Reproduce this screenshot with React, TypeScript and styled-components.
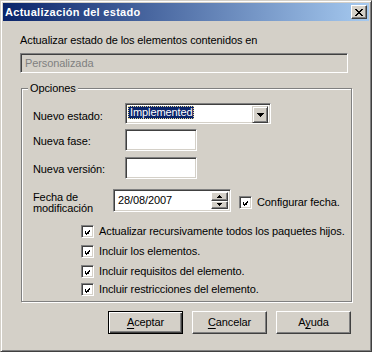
import styled, { createGlobalStyle, css } from 'styled-components'

const GlobalStyle = createGlobalStyle`
  html, body {
    margin: 0;
    padding: 0;
    background: #D4D0C8;
  }
  body {
    font-family: "Liberation Sans", Arial, sans-serif;
    font-size: 11px;
    line-height: 13px;
    letter-spacing: -0.1px;
    color: #000;
  }
`

const raised = css`
  box-sizing: border-box;
  background: #D4D0C8;
  border: 1px solid;
  border-color: #fff #404040 #404040 #fff;
  box-shadow: inset -1px -1px #808080;
`

const sunken = css`
  box-sizing: border-box;
  border: 1px solid;
  border-color: #808080 #fff #fff #808080;
  box-shadow: inset 1px 1px #404040, inset -1px -1px #D4D0C8;
`

const Window = styled.div`
  box-sizing: border-box;
  width: 372px;
  height: 352px;
  background: #D4D0C8;
  border: 1px solid;
  border-color: #D4D0C8 #404040 #404040 #D4D0C8;
  box-shadow: inset 1px 1px #fff, inset -1px -1px #808080;
  padding: 2px;
  display: flex;
  flex-direction: column;
`

const TitleBar = styled.div`
  flex: none;
  height: 18px;
  display: flex;
  align-items: center;
  justify-content: space-between;
  padding: 0 2px;
  background: linear-gradient(to right, #0A246A, #A6CAF0);
`

const Title = styled.span`
  color: #fff;
  font-weight: bold;
  letter-spacing: 0.3px;
`

const CloseButton = styled.div`
  ${raised};
  width: 16px;
  height: 14px;
  display: flex;
  align-items: center;
  justify-content: center;
`

const Content = styled.div`
  display: flex;
  flex-direction: column;
  align-items: flex-start;
  padding: 13px 0 0 17px;
`

const Prompt = styled.div`
  line-height: 13px;
`

const DisabledBox = styled.div`
  ${sunken};
  margin-top: 6px;
  width: 328px;
  height: 20px;
  padding: 3px 0 0 4px;
  color: #808080;
`

const Group = styled.fieldset`
  box-sizing: border-box;
  margin: 9px 0 0 1px;
  width: 331px;
  min-width: 0;
  padding: 8px 0 5px 11px;
  border: 1px solid #808080;
  box-shadow: inset 1px 1px #fff, 1px 1px #fff;
`

const Legend = styled.legend`
  margin-left: -5px;
  padding: 0 2px;
  line-height: 13px;
  background: #D4D0C8;
`

const FieldRow = styled.div<{ gap: number }>`
  display: flex;
  align-items: flex-start;
  margin-top: ${(p) => p.gap}px;
`

const Label = styled.div<{ width: number; top: number; lh?: number }>`
  width: ${(p) => p.width}px;
  padding-top: ${(p) => p.top}px;
  line-height: ${(p) => p.lh ?? 13}px;
  flex: none;
`

const Combo = styled.div`
  ${sunken};
  width: 146px;
  height: 21px;
  background: #fff;
  padding: 2px;
  display: flex;
  justify-content: space-between;
`

const Selected = styled.span`
  height: 13px;
  padding: 0 1px 0 2px;
  background: #0A246A;
  color: #fff;
  outline: 1px dotted #E8D890;
  outline-offset: -1px;
`

const DropButton = styled.div`
  box-sizing: border-box;
  width: 16px;
  height: 17px;
  border: 1px solid;
  border-color: #D4D0C8 #404040 #404040 #D4D0C8;
  box-shadow: inset 1px 1px #fff, inset -1px -1px #808080;
  background: #D4D0C8;
  display: flex;
  align-items: center;
  justify-content: center;
`

const TextBox = styled.div`
  ${sunken};
  width: 72px;
  height: 22px;
  background: #fff;
`

const DateBox = styled.div`
  ${sunken};
  width: 118px;
  height: 23px;
  background: #fff;
  padding: 2px 2px 2px 4px;
  display: flex;
  justify-content: space-between;
`

const DateText = styled.span`
  padding-top: 2px;
`

const Spinner = styled.div`
  width: 17px;
  display: flex;
  flex-direction: column;
`

const SpinButton = styled.div<{ h: number }>`
  ${raised};
  height: ${(p) => p.h}px;
  display: flex;
  align-items: center;
  justify-content: center;
`

const CheckRow = styled.div<{ gap: number; indent?: number }>`
  display: flex;
  align-items: center;
  gap: 5px;
  height: 13px;
  margin-top: ${(p) => p.gap}px;
  margin-left: ${(p) => p.indent ?? 0}px;
`

const CheckBox = styled.span`
  ${sunken};
  width: 13px;
  height: 13px;
  background: #fff;
  padding: 2px;
  flex: none;
  display: flex;
`

const CheckList = styled.div`
  display: flex;
  flex-direction: column;
  padding-left: 48px;
  margin-top: 11px;
`

const ButtonRow = styled.div`
  box-sizing: border-box;
  width: 331px;
  margin: 9px 0 0 1px;
  padding-right: 1px;
  display: flex;
  justify-content: flex-end;
  gap: 9px;
`

const PushButton = styled.div<{ primary?: boolean }>`
  box-sizing: border-box;
  width: 75px;
  height: 23px;
  display: flex;
  align-items: center;
  justify-content: center;
  background: #D4D0C8;
  border: 1px solid;
  ${(p) =>
    p.primary
      ? css`
          border-color: #000;
          box-shadow: inset 1px 1px #fff, inset -1px -1px #404040, inset -2px -2px #808080;
        `
      : css`
          border-color: #fff #404040 #404040 #fff;
          box-shadow: inset -1px -1px #808080;
        `}
  u {
    text-decoration: underline;
    text-underline-offset: 2px;
  }
`

type Run = [number, number, number]

function Pixels({ w, h, runs }: { w: number; h: number; runs: Run[] }) {
  return (
    <svg width={w} height={h} viewBox={`0 0 ${w} ${h}`} shapeRendering="crispEdges" style={{ display: 'block' }}>
      {runs.map(([x, y, len], i) => (
        <rect key={i} x={x} y={y} width={len} height={1} fill="#000" />
      ))}
    </svg>
  )
}

const CLOSE_X: Run[] = [
  [0, 0, 2], [6, 0, 2],
  [1, 1, 2], [5, 1, 2],
  [2, 2, 4],
  [3, 3, 2],
  [2, 4, 4],
  [1, 5, 2], [5, 5, 2],
  [0, 6, 2], [6, 6, 2],
]

const ARROW_DOWN: Run[] = [[0, 0, 7], [1, 1, 5], [2, 2, 3], [3, 3, 1]]
const SPIN_UP: Run[] = [[2, 0, 1], [1, 1, 3], [0, 2, 5]]
const SPIN_DOWN: Run[] = [[0, 0, 5], [1, 1, 3], [2, 2, 1]]

function CheckMark() {
  const cols = [[1, 3], [2, 4], [3, 5], [4, 4], [5, 3], [6, 2], [7, 1]]
  return (
    <svg width={9} height={9} viewBox="0 0 9 9" shapeRendering="crispEdges" style={{ display: 'block' }}>
      {cols.map(([x, y]) => (
        <rect key={x} x={x} y={y} width={1} height={3} fill="#000" />
      ))}
    </svg>
  )
}

function Check({ label, gap, indent }: { label: string; gap: number; indent?: number }) {
  return (
    <CheckRow gap={gap} indent={indent}>
      <CheckBox><CheckMark /></CheckBox>
      <span>{label}</span>
    </CheckRow>
  )
}

export default function App() {
  return (
    <>
      <GlobalStyle />
      <Window>
        <TitleBar>
          <Title>Actualización del estado</Title>
          <CloseButton><Pixels w={8} h={7} runs={CLOSE_X} /></CloseButton>
        </TitleBar>
        <Content>
          <Prompt>Actualizar estado de los elementos contenidos en</Prompt>
          <DisabledBox>Personalizada</DisabledBox>
          <Group>
            <Legend>Opciones</Legend>
            <FieldRow gap={0}>
              <Label width={92} top={7}>Nuevo estado:</Label>
              <Combo>
                <Selected>Implemented</Selected>
                <DropButton><Pixels w={7} h={4} runs={ARROW_DOWN} /></DropButton>
              </Combo>
            </FieldRow>
            <FieldRow gap={5}>
              <Label width={92} top={6}>Nueva fase:</Label>
              <TextBox />
            </FieldRow>
            <FieldRow gap={6}>
              <Label width={92} top={6}>Nueva versión:</Label>
              <TextBox />
            </FieldRow>
            <FieldRow gap={10}>
              <Label width={80} top={3} lh={11}>Fecha de<br />modificación</Label>
              <DateBox>
                <DateText>28/08/2007</DateText>
                <Spinner>
                  <SpinButton h={10}><Pixels w={5} h={3} runs={SPIN_UP} /></SpinButton>
                  <SpinButton h={9}><Pixels w={5} h={3} runs={SPIN_DOWN} /></SpinButton>
                </Spinner>
              </DateBox>
              <Check gap={7} indent={8} label="Configurar fecha." />
            </FieldRow>
            <CheckList>
              <Check gap={0} label="Actualizar recursivamente todos los paquetes hijos." />
              <Check gap={7} label="Incluir los elementos." />
              <Check gap={7} label="Incluir requisitos del elemento." />
              <Check gap={5} label="Incluir restricciones del elemento." />
            </CheckList>
          </Group>
          <ButtonRow>
            <PushButton primary><span><u>A</u>ceptar</span></PushButton>
            <PushButton><span><u>C</u>ancelar</span></PushButton>
            <PushButton><span>A<u>y</u>uda</span></PushButton>
          </ButtonRow>
        </Content>
      </Window>
    </>
  )
}
